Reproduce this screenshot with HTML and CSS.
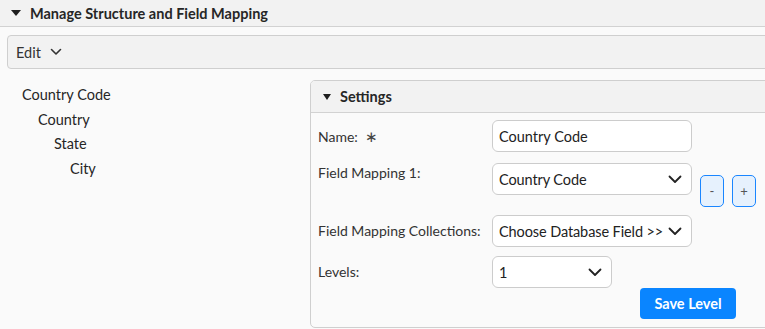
FILE: index.html
```html
<!DOCTYPE html>
<html>
<head>
<meta charset="utf-8">
<link rel="stylesheet" href="styles.css">
</head>
<body>
<div class="section-header">
  <span class="tri"></span>
  <span class="section-title">Manage Structure and Field Mapping</span>
</div>
<div class="toolbar">
  <span class="edit">Edit</span>
  <svg class="chev" width="12" height="8" viewBox="0 0 12 8"><path d="M1.5 1.5 L6 6 L10.5 1.5" fill="none" stroke="#333" stroke-width="1.6" stroke-linecap="round" stroke-linejoin="round"/></svg>
</div>
<div class="content">
  <div class="tree">
    <div class="node l0">Country Code</div>
    <div class="node l1">Country</div>
    <div class="node l2">State</div>
    <div class="node l3">City</div>
  </div>
  <div class="panel">
    <div class="panel-header">
      <span class="tri small"></span>
      <span class="panel-title">Settings</span>
    </div>
    <div class="panel-body">
      <div class="row r1">
        <div class="label">Name:&nbsp; <span class="req">∗</span></div>
        <div class="field input">Country Code</div>
      </div>
      <div class="row r2">
        <div class="label top">Field Mapping 1:</div>
        <div class="field select">Country Code
          <svg class="schev" width="14" height="9" viewBox="0 0 14 9"><path d="M1.5 1.5 L7 7 L12.5 1.5" fill="none" stroke="#222" stroke-width="1.8" stroke-linecap="round" stroke-linejoin="round"/></svg>
        </div>
        <div class="mini-btns">
          <div class="mini">-</div>
          <div class="mini">+</div>
        </div>
      </div>
      <div class="row r3">
        <div class="label">Field Mapping Collections:</div>
        <div class="field select">Choose Database Field &gt;&gt;
          <svg class="schev" width="14" height="9" viewBox="0 0 14 9"><path d="M1.5 1.5 L7 7 L12.5 1.5" fill="none" stroke="#222" stroke-width="1.8" stroke-linecap="round" stroke-linejoin="round"/></svg>
        </div>
      </div>
      <div class="row r4">
        <div class="label">Levels:</div>
        <div class="field select short">1
          <svg class="schev" width="14" height="9" viewBox="0 0 14 9"><path d="M1.5 1.5 L7 7 L12.5 1.5" fill="none" stroke="#222" stroke-width="1.8" stroke-linecap="round" stroke-linejoin="round"/></svg>
        </div>
      </div>
      <div class="actions">
        <div class="save">Save Level</div>
      </div>
    </div>
  </div>
</div>
</body>
</html>
```

FILE: styles.css
```css
html, body {
  margin: 0;
  padding: 0;
}
body {
  background: #fafafa;
  font-family: Lato, "Noto Sans", sans-serif;
  font-size: 14px;
  color: #2b2b2b;
  overflow: hidden;
  width: 765px;
  height: 329px;
}
.section-header {
  background: #f2f2f2;
  border-bottom: 1px solid #d2d2d2;
  display: flex;
  align-items: center;
  padding-left: 11px;
  box-sizing: border-box;
  height: 27px;
}
.tri {
  width: 0;
  height: 0;
  border-left: 5px solid transparent;
  border-right: 5px solid transparent;
  border-top: 6px solid #1e1e1e;
  margin-right: 9px;
}
.tri.small {
  border-left-width: 4.5px;
  border-right-width: 4.5px;
  border-top-width: 6px;
  margin-right: 9px;
}
.section-title {
  font-weight: bold;
  font-size: 14.5px;
  color: #262626;
}
.toolbar {
  margin: 8px -10px 0 7px;
  height: 34px;
  box-sizing: border-box;
  border: 1px solid #cfcfcf;
  border-radius: 4px;
  background: #f2f2f2;
  display: flex;
  align-items: center;
  padding-left: 8px;
}
.edit {
  font-size: 14.5px;
  color: #333;
  margin-right: 9px;
}
.content {
  display: flex;
  align-items: flex-start;
}
.tree {
  width: 310px;
  flex: none;
  padding-top: 14px;
}
.node {
  line-height: 24.6px;
  font-size: 14.5px;
  color: #262626;
}
.l0 { padding-left: 22px; }
.l1 { padding-left: 38px; }
.l2 { padding-left: 54px; }
.l3 { padding-left: 70px; }
.panel {
  flex: 1;
  margin-top: 11px;
  margin-right: -10px;
  border: 1px solid #cfcfcf;
  border-radius: 5px;
  background: #fafafa;
  overflow: hidden;
}
.panel-header {
  height: 32px;
  box-sizing: border-box;
  background: #f2f2f2;
  border-bottom: 1px solid #d2d2d2;
  display: flex;
  align-items: center;
  padding-left: 12px;
}
.panel-title {
  font-weight: bold;
  font-size: 14.5px;
  color: #262626;
}
.panel-body {
  padding: 7px 7px 8px 7px;
}
.row {
  display: flex;
  align-items: flex-start;
}
.r1 { margin-bottom: 10px; }
.r2 { margin-bottom: 8px; }
.r3 { margin-bottom: 9px; }
.r4 { margin-bottom: 0; }
.label {
  width: 174px;
  flex: none;
  line-height: 32px;
  color: #333;
  font-size: 14px;
}
.label.top {
  line-height: 19px;
}
.req {
  font-size: 15px;
  color: #444;
}
.field {
  box-sizing: border-box;
  height: 32px;
  width: 200px;
  border: 1px solid #cccccc;
  border-radius: 6px;
  background: #ffffff;
  padding-left: 6px;
  display: flex;
  align-items: center;
  font-size: 14.5px;
  color: #222;
  position: relative;
  white-space: nowrap;
}
.field.select {
  letter-spacing: -0.1px;
}
.field.short {
  width: 120px;
}
.schev {
  position: absolute;
  right: 9px;
  top: 11px;
}
.mini-btns {
  display: flex;
  gap: 8px;
  margin-top: 12px;
  margin-left: 8px;
}
.mini {
  width: 24px;
  height: 32px;
  box-sizing: border-box;
  border: 1px solid #1a86ff;
  border-radius: 5px;
  background: #e6f1fd;
  color: #555;
  font-size: 13px;
  display: flex;
  align-items: center;
  justify-content: center;
}
.actions {
  display: flex;
}
.save {
  margin-left: 322px;
  width: 96px;
  height: 31px;
  border-radius: 4px;
  background: #0a85ff;
  color: #fff;
  font-weight: bold;
  font-size: 14.5px;
  display: flex;
  align-items: center;
  justify-content: center;
}
```
